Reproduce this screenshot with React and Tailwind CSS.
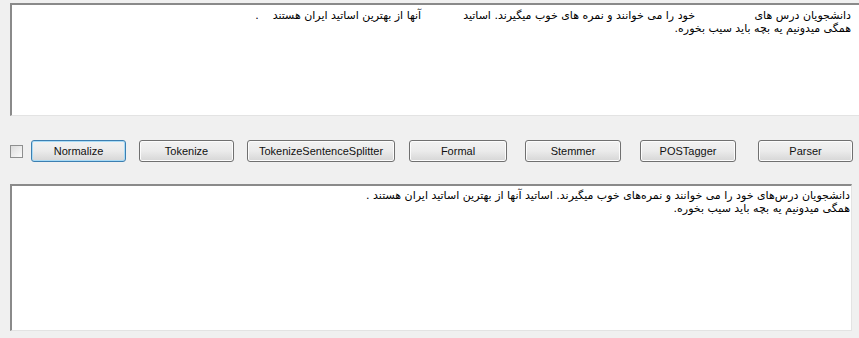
export default function App() {
  const buttons = [
    { label: "Normalize", cls: "w-[95px] ml-[8px]", focused: true },
    { label: "Tokenize", cls: "w-[95px] ml-[13px]" },
    { label: "TokenizeSentenceSplitter", cls: "w-[148px] ml-[13px]" },
    { label: "Formal", cls: "w-[98px] ml-[14px]" },
    { label: "Stemmer", cls: "w-[96px] ml-[18px]" },
    { label: "POSTagger", cls: "w-[96px] ml-[19px]" },
    { label: "Parser", cls: "w-[95px] ml-[22px]" },
  ];

  const persian = { fontFamily: '"DejaVu Sans", sans-serif' };

  return (
    <div className="w-[859px] h-[338px] overflow-hidden bg-[#f0f0f0] pt-[3px] pl-[10px]">
      {/* Input box */}
      <div
        dir="rtl"
        className="w-[870px] h-[113px] bg-white border-t-2 border-l-2 border-t-[#8a8a8a] border-l-[#8a8a8a] border-b border-b-[#e3e3e3] pt-[4px] pr-[29px] text-[11px] leading-[13px] text-black whitespace-pre-wrap"
        style={persian}
      >
        {"دانشجویان درس های                 خود را می خوانند و نمره های خوب میگیرند. اساتید            آنها از بهترین اساتید ایران هستند    .\nهمگی میدونیم یه بچه باید سیب بخوره."}
      </div>

      {/* Buttons row */}
      <div className="flex items-center mt-[24px] h-[22px]">
        <div className="w-[13px] h-[13px] border border-[#8e8f8f] bg-gradient-to-br from-[#dcdcdc] to-[#fbfbfb]" />
        {buttons.map((b) => (
          <div
            key={b.label}
            className={`${b.cls} h-[22px] rounded-[3px] border flex items-center justify-center text-[11px] text-[#111] bg-gradient-to-b from-[#f2f2f2] via-[#ebebeb] to-[#d6d6d6] ${
              b.focused
                ? "border-[#3c7fb1] shadow-[inset_0_0_0_1px_#a9dbf6]"
                : "border-[#707070] shadow-[inset_0_0_0_1px_#fcfcfc]"
            }`}
            style={{ fontFamily: '"Liberation Sans", Arial, sans-serif' }}
          >
            {b.label}
          </div>
        ))}
      </div>

      {/* Output box */}
      <div
        dir="rtl"
        className="mt-[22px] w-[842px] h-[147px] bg-white border-t-2 border-l-2 border-t-[#8a8a8a] border-l-[#8a8a8a] border-b border-r border-b-[#e3e3e3] border-r-[#e3e3e3] pt-[3px] pr-[1px] text-[11px] leading-[13px] text-black whitespace-pre-wrap"
        style={persian}
      >
        {"دانشجویان درس‌های خود را می خوانند و نمره‌های خوب میگیرند. اساتید آنها از بهترین اساتید ایران هستند .\nهمگی میدونیم یه بچه باید سیب بخوره."}
      </div>
    </div>
  );
}
